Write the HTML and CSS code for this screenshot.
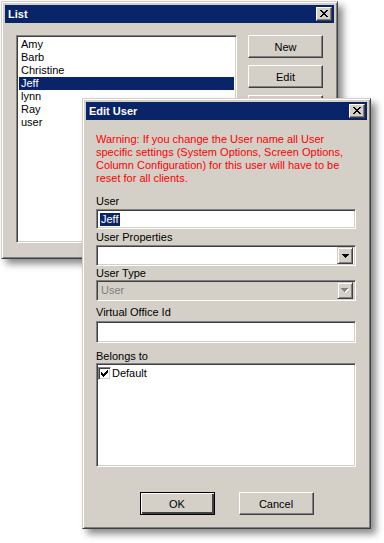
FILE: index.html
```html
<!DOCTYPE html>
<html lang="en">
<head>
    <meta charset="UTF-8">
    <meta name="viewport" content="width=device-width, initial-scale=1.0">
    <title>List - Edit User</title>
    <link rel="stylesheet" href="styles.css">
</head>
<body>
    <div class="desktop">
        <div class="window list-window">
            <div class="titlebar">
                <span class="title">List</span>
                <button class="close-btn" type="button">
                    <svg width="8" height="7" viewBox="0 0 8 7" shape-rendering="crispEdges">
                        <path d="M0 0h2v1h-2zM6 0h2v1h-2zM1 1h2v1h-2zM5 1h2v1h-2zM2 2h4v1h-4zM3 3h2v1h-2zM2 4h4v1h-4zM1 5h2v1h-2zM5 5h2v1h-2zM0 6h2v1h-2zM6 6h2v1h-2z" fill="#000"/>
                    </svg>
                </button>
            </div>
            <div class="list-body">
                <ul class="listbox">
                    <li>Amy</li>
                    <li>Barb</li>
                    <li>Christine</li>
                    <li class="selected">Jeff</li>
                    <li>lynn</li>
                    <li>Ray</li>
                    <li>user</li>
                </ul>
                <div class="side-buttons">
                    <button class="btn" type="button">New</button>
                    <button class="btn" type="button">Edit</button>
                    <button class="btn" type="button">Delete</button>
                </div>
            </div>
        </div>

        <div class="window edit-window">
            <div class="titlebar">
                <span class="title">Edit User</span>
                <button class="close-btn" type="button">
                    <svg width="8" height="7" viewBox="0 0 8 7" shape-rendering="crispEdges">
                        <path d="M0 0h2v1h-2zM6 0h2v1h-2zM1 1h2v1h-2zM5 1h2v1h-2zM2 2h4v1h-4zM3 3h2v1h-2zM2 4h4v1h-4zM1 5h2v1h-2zM5 5h2v1h-2zM0 6h2v1h-2zM6 6h2v1h-2z" fill="#000"/>
                    </svg>
                </button>
            </div>
            <div class="edit-body">
                <p class="warning">Warning: If you change the User name all User specific settings (System Options, Screen Options, Column Configuration) for this user will have to be reset for all clients.</p>

                <label class="field-label label-user">User</label>
                <div class="field text-field user-field"><span class="sel-text">Jeff</span></div>

                <label class="field-label label-props">User Properties</label>
                <div class="field combo">
                    <span class="combo-text"></span>
                    <span class="combo-arrow">
                        <svg width="7" height="4" viewBox="0 0 7 4" shape-rendering="crispEdges">
                            <path d="M0 0h7v1h-7zM1 1h5v1h-5zM2 2h3v1h-3zM3 3h1v1h-1z" fill="#000"/>
                        </svg>
                    </span>
                </div>

                <label class="field-label label-type">User Type</label>
                <div class="field combo disabled">
                    <span class="combo-text">User</span>
                    <span class="combo-arrow">
                        <svg width="8" height="5" viewBox="0 0 8 5" shape-rendering="crispEdges">
                            <path d="M1 1h7v1h-7zM2 2h5v1h-5zM3 3h3v1h-3zM4 4h1v1h-1z" fill="#fff"/>
                            <path d="M0 0h7v1h-7zM1 1h5v1h-5zM2 2h3v1h-3zM3 3h1v1h-1z" fill="#808080"/>
                        </svg>
                    </span>
                </div>

                <label class="field-label label-office">Virtual Office Id</label>
                <div class="field text-field office-field"></div>

                <label class="field-label label-belongs">Belongs to</label>
                <div class="field check-list">
                    <div class="check-item">
                        <span class="checkbox">
                            <svg width="7" height="7" viewBox="0 0 7 7" shape-rendering="crispEdges">
                                <path d="M6 0h1v3h-1zM5 1h1v3h-1zM4 2h1v3h-1zM0 2h1v3h-1zM1 3h1v3h-1zM2 4h1v3h-1zM3 3h1v3h-1z" fill="#000"/>
                            </svg>
                        </span>
                        <span>Default</span>
                    </div>
                </div>

                <div class="dialog-buttons">
                    <button class="btn default" type="button">OK</button>
                    <button class="btn" type="button">Cancel</button>
                </div>
            </div>
        </div>
    </div>
</body>
</html>
```

FILE: styles.css
```css
* {
    box-sizing: border-box;
}
body {
    margin: 0;
    background: #fff;
    font-family: "Liberation Sans", Arial, sans-serif;
    font-size: 11px;
    line-height: 13px;
    color: #000;
}
.desktop {
    position: relative;
    width: 384px;
    height: 543px;
    overflow: hidden;
}
.window {
    position: absolute;
    background: #d4d0c8;
    border: 1px solid;
    border-color: #d4d0c8 #404040 #404040 #d4d0c8;
    box-shadow: inset 1px 1px #fff, inset -1px -1px #808080, 5px 5px 7px rgba(0, 0, 0, 0.45);
    padding: 3px;
    display: flex;
    flex-direction: column;
}
.list-window {
    left: 1px;
    top: 1px;
    width: 337px;
    height: 258px;
}
.edit-window {
    left: 82px;
    top: 98px;
    width: 289px;
    height: 431px;
}
.titlebar {
    height: 18px;
    background: #0a246a;
    display: flex;
    align-items: center;
    justify-content: space-between;
    padding: 0 2px 0 3px;
    flex-shrink: 0;
}
.title {
    color: #fff;
    font-weight: bold;
    font-size: 11px;
}
.close-btn {
    width: 16px;
    height: 14px;
    padding: 0;
    background: #d4d0c8;
    border: 1px solid;
    border-color: #fff #404040 #404040 #fff;
    box-shadow: inset -1px -1px #808080;
    display: flex;
    align-items: center;
    justify-content: center;
}
.close-btn svg {
    display: block;
    margin: 0 1px 1px 0;
}
.btn {
    width: 75px;
    height: 23px;
    padding: 0;
    background: #d4d0c8;
    font-family: "Liberation Sans", Arial, sans-serif;
    font-size: 11px;
    color: #000;
    border: 1px solid;
    border-color: #fff #404040 #404040 #fff;
    box-shadow: inset -1px -1px #808080;
}
.btn.default {
    border: 1px solid #000;
    box-shadow: inset 1px 1px #fff, inset -2px -2px #404040, inset -1px -1px #808080;
}

/* list window */
.list-body {
    display: flex;
    gap: 11px;
    padding: 12px 10px 0 11px;
}
.listbox {
    width: 221px;
    height: 208px;
    margin: 0;
    list-style: none;
    background: #fff;
    border: 1px solid;
    border-color: #808080 #fff #fff #808080;
    box-shadow: inset 1px 1px #404040, inset -1px -1px #d4d0c8;
    padding: 2px 2px;
}
.listbox li {
    height: 13px;
    padding-left: 2px;
}
.listbox li.selected {
    background: #0a246a;
    color: #fff;
}
.side-buttons {
    display: flex;
    flex-direction: column;
    gap: 7px;
}

/* edit dialog */
.edit-body {
    display: flex;
    flex-direction: column;
    padding: 13px 10px 0 10px;
}
.warning {
    margin: 0;
    color: #ff0000;
    width: 250px;
}
.field-label {
    display: block;
    height: 13px;
}
.label-user {
    margin-top: 10px;
}
.label-props {
    margin-top: 2px;
}
.label-type {
    margin-top: 1px;
}
.label-office {
    margin-top: 5px;
}
.label-belongs {
    margin-top: 7px;
}
.field {
    width: 260px;
    background: #fff;
    border: 1px solid;
    border-color: #808080 #fff #fff #808080;
    box-shadow: inset 1px 1px #404040, inset -1px -1px #d4d0c8;
}
.text-field {
    height: 20px;
    margin-top: 1px;
    padding: 3px 3px;
}
.office-field {
    height: 22px;
    margin-top: 2px;
}
.sel-text {
    display: inline-block;
    background: #0a246a;
    color: #fff;
    padding: 0 1px 0 1px;
}
.combo {
    height: 21px;
    margin-top: 1px;
    padding: 2px;
    display: flex;
    align-items: center;
}
.combo-text {
    flex: 1;
    padding-left: 2px;
}
.combo.disabled {
    background: #d4d0c8;
    margin-top: 0;
}
.combo.disabled .combo-text {
    color: #808080;
}
.combo-arrow {
    width: 16px;
    height: 17px;
    background: #d4d0c8;
    border: 1px solid;
    border-color: #d4d0c8 #404040 #404040 #d4d0c8;
    box-shadow: inset 1px 1px #fff, inset -1px -1px #808080;
    display: flex;
    align-items: center;
    justify-content: center;
}
.combo-arrow svg {
    display: block;
}
.check-list {
    height: 104px;
    padding: 3px 1px;
}
.check-item {
    display: flex;
    align-items: center;
    gap: 1px;
}
.checkbox {
    width: 13px;
    height: 13px;
    background: #fff;
    border: 1px solid;
    border-color: #808080 #fff #fff #808080;
    box-shadow: inset 1px 1px #404040, inset -1px -1px #d4d0c8;
    display: flex;
    align-items: center;
    justify-content: center;
}
.dialog-buttons {
    display: flex;
    justify-content: center;
    gap: 24px;
    margin-top: 25px;
}
```
